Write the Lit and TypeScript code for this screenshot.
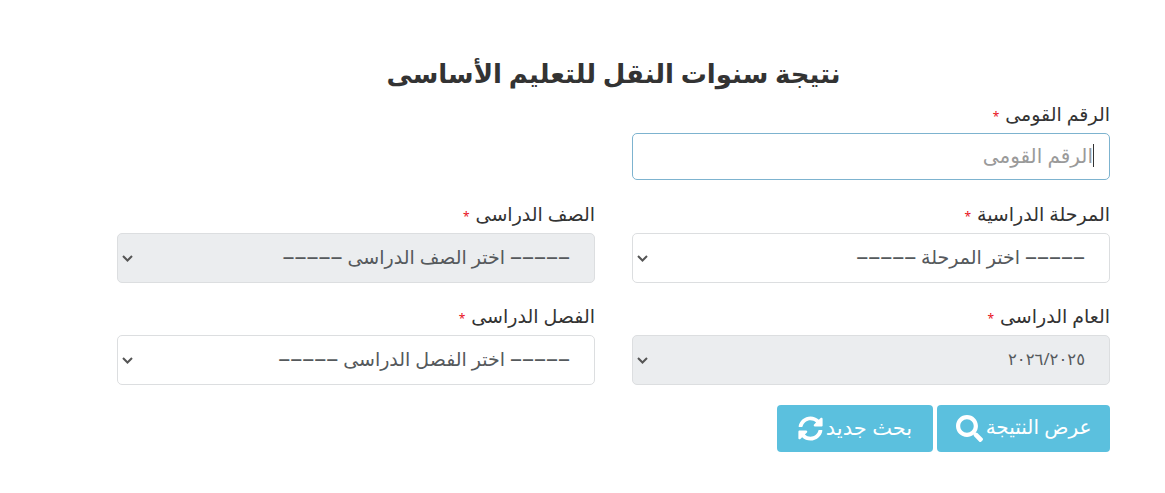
import { LitElement, html, css } from "lit";
import { customElement } from "lit/decorators.js";

const DASHES = "–––––";

@customElement("app-root")
export class AppRoot extends LitElement {
  static styles = css`
    :host { display: block; width: 1165px; height: 493px; background: #fff; overflow: hidden;
      font-family: "Noto Sans", "DejaVu Sans", sans-serif; color: #212529; }
    .page { direction: rtl; padding: 55px 55px 0 0; box-sizing: border-box; width: 1165px; }
    .inner { width: 993px; margin-left: 117px; }
    h1 { margin: 0 0 13px; text-align: center; font-size: 26px; line-height: 36px; font-weight: 700; color: #333; }
    .grid { display: grid; grid-template-columns: 478px 478px; column-gap: 37px; row-gap: 23px; }
    .field { display: flex; flex-direction: column; }
    label { font-size: 19px; line-height: 20px; height: 29px; color: #333; white-space: nowrap; }
    .star { color: #e8101c; font-size: 12px; margin-right: 1px; }
    .control { box-sizing: border-box; width: 100%; height: 50px; border: 1px solid #dcdee0; border-radius: 5px;
      background: #fff; color: #55595c; font: inherit; font-size: 19px; }
    .select { display: flex; align-items: center; justify-content: space-between; padding: 0 24px 3px 4px; white-space: nowrap; line-height: 24px; }
    .muted { background: #ebedef; }
    .chev { width: 11px; height: 7px; margin-top: 3px; fill: none; stroke: #555; stroke-width: 2; }
    .dash { font-size: 24px; line-height: 20px; letter-spacing: 2.4px; }
    .year { font-size: 16.5px; }
    .inputwrap { position: relative; height: 48px; }
    input.control { height: 47px; border-color: #7db3cf; padding: 0 16px 3px; font-size: 20px; }
    input::placeholder { color: #9a9a9a; opacity: 1; }
    .caret { position: absolute; right: 16px; top: 11px; width: 1px; height: 23px; background: #333; }
    .actions { display: flex; gap: 4px; margin-top: 20px; }
    button { height: 47px; display: flex; align-items: center; justify-content: center; gap: 3px;
      border: 0; border-radius: 4px; background: #5bc0de; color: #fff; font: inherit; font-size: 20px; padding: 0; }
    button span { margin-bottom: 4px; }
    .b1 { width: 173px; }
    .b2 { width: 156px; font-size: 21px; }
    .icon { display: block; fill: #fff; }
  `;

  private star() {
    return html`<span class="star">*</span>`;
  }

  private select(label: string, text: unknown, muted = false) {
    return html`<div class="field">
      <label>${label} ${this.star()}</label>
      <div class="control select ${muted ? "muted" : ""}" role="combobox">
        <span>${text}</span>
        <svg class="chev" viewBox="0 0 11 7"><path d="M1 1l4.500 4.500L10 1"/></svg>
      </div>
    </div>`;
  }

  private choose(text: string) {
    return html`<span class="dash">${DASHES}</span> ${text} <span class="dash">${DASHES}</span>`;
  }

  render() {
    return html`<div class="page"><div class="inner">
      <h1>نتيجة سنوات النقل للتعليم الأساسى</h1>
      <div class="grid">
        <div class="field">
          <label>الرقم القومى ${this.star()}</label>
          <div class="inputwrap">
            <input class="control" placeholder="الرقم القومى" />
            <span class="caret"></span>
          </div>
        </div>
        <div></div>
        ${this.select("المرحلة الدراسية", this.choose("اختر المرحلة"))}
        ${this.select("الصف الدراسى", this.choose("اختر الصف الدراسى"), true)}
        ${this.select("العام الدراسى", html`<span class="year">٢٠٢٦/٢٠٢٥</span>`, true)}
        ${this.select("الفصل الدراسى", this.choose("اختر الفصل الدراسى"))}
      </div>
      <div class="actions">
        <button class="b1"><span>عرض النتيجة</span>
          <svg class="icon" width="27" height="27" viewBox="0 0 512 512"><path d="M505 442.700L405.300 343c-4.500-4.500-10.600-7-17-7H372c27.600-35.300 44-79.700 44-128C416 93.100 322.900 0 208 0S0 93.100 0 208s93.100 208 208 208c48.300 0 92.700-16.400 128-44v16.300c0 6.400 2.500 12.500 7 17l99.700 99.700c9.400 9.400 24.600 9.400 33.900 0l28.300-28.300c9.400-9.400 9.400-24.600.1-34zM208 336c-70.700 0-128-57.200-128-128 0-70.700 57.200-128 128-128 70.700 0 128 57.200 128 128 0 70.700-57.200 128-128 128z"/></svg>
        </button>
        <button class="b2"><span>بحث جديد</span>
          <svg class="icon" width="25" height="25" viewBox="0 0 512 512"><path d="M370.720 133.280C339.458 104.008 298.888 87.962 255.848 88c-77.458.068-144.328 53.178-162.791 126.850-1.344 5.363-6.122 9.150-11.651 9.150H24.103c-7.498 0-13.194-6.807-11.807-14.176C33.933 94.924 134.813 8 256 8c66.448 0 126.791 26.136 171.315 68.685L463.030 40.970C478.149 25.851 504 36.559 504 57.941V192c0 13.255-10.745 24-24 24H345.941c-21.382 0-32.090-25.851-16.971-40.971l41.750-41.749zM32 296h134.059c21.382 0 32.090 25.851 16.971 40.971l-41.750 41.750c31.262 29.273 71.835 45.319 114.876 45.280 77.418-.070 144.315-53.144 162.787-126.849 1.344-5.363 6.122-9.150 11.651-9.150h57.304c7.498 0 13.194 6.807 11.807 14.176C478.067 417.076 377.187 504 256 504c-66.448 0-126.791-26.136-171.315-68.685L48.970 471.030C33.851 486.149 8 475.441 8 454.059V320c0-13.255 10.745-24 24-24z"/></svg>
        </button>
      </div>
    </div></div>`;
  }
}
